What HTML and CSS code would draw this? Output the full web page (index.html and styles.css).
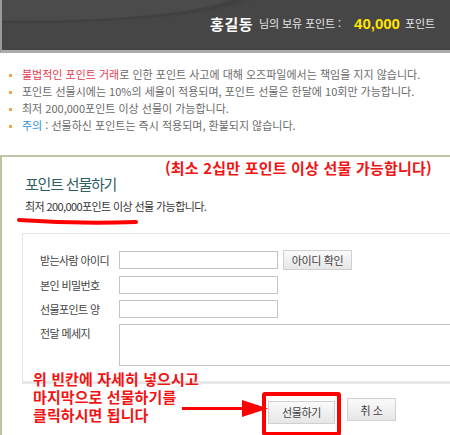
FILE: index.html
```html
<!DOCTYPE html>
<html lang="ko">
<head>
    <meta charset="UTF-8">
    <title>포인트 선물하기</title>
    <link rel="stylesheet" href="styles.css">
</head>
<body>
    <!-- 보유 포인트 -->
    <div class="top-bar">
        <strong class="user">홍길동</strong>
        <span class="small">님의 보유 포인트 :</span>
        <strong class="points">40,000</strong>
        <span class="small">포인트</span>
    </div>

    <ul class="notice">
        <li><em class="warn">불법적인 포인트 거래</em>로 인한 포인트 사고에 대해 오즈파일에서는 책임을 지지 않습니다.</li>
        <li>포인트 선물시에는 10%의 세율이 적용되며, 포인트 선물은 한달에 10회만 가능합니다.</li>
        <li>최저 200,000포인트 이상 선물이 가능합니다.</li>
        <li><em class="info">주의</em> : 선물하신 포인트는 즉시 적용되며, 환불되지 않습니다.</li>
    </ul>

    <section class="gift">
        <p class="gift-note">(최소 2십만 포인트 이상 선물 가능합니다)</p>
        <h2>포인트 선물하기</h2>
        <p class="gift-min">최저 200,000포인트 이상 선물 가능합니다.</p>
        <svg class="mark-line" width="124" height="10" viewBox="0 0 124 10">
            <path d="M3 4 Q 60 8 120 6" stroke="#f00" stroke-width="4" fill="none" stroke-linecap="round"/>
        </svg>

        <div class="form-box">
            <div class="row">
                <label>받는사람 아이디</label>
                <input type="text">
                <button class="btn btn-check">아이디 확인</button>
            </div>
            <div class="row">
                <label>본인 비밀번호</label>
                <input type="password">
            </div>
            <div class="row">
                <label>선물포인트 양</label>
                <input type="text">
            </div>
            <div class="row">
                <label>전달 메세지</label>
                <textarea></textarea>
            </div>
        </div>

        <div class="actions">
            <div class="hint">
                <p>위 빈칸에 자세히 넣으시고</p>
                <p>마지막으로 선물하기를</p>
                <p>클릭하시면 됩니다</p>
            </div>
            <svg class="arrow" width="86" height="17" viewBox="0 0 86 17">
                <rect x="0" y="7" width="64" height="3" fill="#f00"/>
                <polygon points="60,0 86,8.5 60,17" fill="#f00"/>
            </svg>
            <div class="send-wrap">
                <button class="btn btn-send">선물하기</button>
            </div>
            <button class="btn btn-cancel">취 소</button>
        </div>
    </section>
</body>
</html>
```

FILE: styles.css
```css
* {
    margin: 0;
    padding: 0;
    box-sizing: border-box;
}

body {
    font-family: 'Noto Sans CJK KR', 'Noto Sans', sans-serif;
    background-color: #fff;
    color: #444;
    overflow: hidden;
}

/* Top bar */
.top-bar {
    height: 53px;
    padding: 0 15px 4px 0;
    display: flex;
    justify-content: flex-end;
    align-items: center;
    gap: 5px;
    background-color: #464646;
    background-image: radial-gradient(ellipse 300px 40px at 20px -8px, #4b4b4b 70%, #3f3f3f 74%, transparent 80%);
    border-left: 2px solid #9a9a9a;
    border-bottom: 3px solid #ababab;
    color: #e6e6e6;
}

.top-bar .user {
    font-size: 15px;
    color: #fff;
    letter-spacing: 0.5px;
    margin-right: 1px;
}

.top-bar .small {
    font-size: 11px;
    letter-spacing: -0.1px;
}

.top-bar .points {
    font-family: 'Liberation Sans', sans-serif;
    font-size: 15px;
    color: #ffe400;
    margin-left: 8px;
}

/* Notice */
.notice {
    list-style: none;
    padding: 13px 0 0 22px;
    font-size: 11px;
    line-height: 17px;
    color: #6a6a6a;
}

.notice li {
    position: relative;
}

.notice li::before {
    content: '';
    position: absolute;
    left: -13px;
    top: 8px;
    width: 3px;
    height: 3px;
    background: #f5a04a;
}

.notice em {
    font-style: normal;
}

.notice .warn {
    color: #e5394f;
}

.notice .info {
    color: #2f8fd8;
}

/* Gift panel */
.gift {
    position: relative;
    margin-top: 21px;
    padding: 17px 0 20px 20px;
    border-top: 2px solid #c2c2a4;
    border-left: 2px solid #c2c2a0;
    overflow: hidden;
}

.gift-note {
    position: absolute;
    left: 163px;
    top: 0;
    font-size: 15px;
    font-weight: bold;
    color: #f01414;
    letter-spacing: 0.2px;
}

.gift h2 {
    margin-left: 3px;
    font-size: 15px;
    line-height: 20px;
    font-weight: normal;
    color: #2e5d63;
    letter-spacing: -1.2px;
}

.gift-min {
    margin: 3px 0 0 3px;
    font-size: 11px;
    line-height: 18px;
    color: #333;
    letter-spacing: -0.6px;
}

.mark-line {
    position: absolute;
    left: 14px;
    top: 59px;
}

/* Form */
.form-box {
    width: 520px;
    margin-top: 18px;
    padding: 17px 0 15px 17px;
    border: 1px solid #e4e4e4;
    border-bottom: 3px solid #e8e8e8;
    display: flex;
    flex-direction: column;
    gap: 6px;
}

.row {
    display: flex;
    align-items: flex-start;
}

.row label {
    width: 79px;
    font-size: 11px;
    line-height: 18px;
    color: #444;
    letter-spacing: -0.6px;
}

.row input,
.row textarea {
    width: 159px;
    height: 18px;
    border: 1px solid #c4c4c4;
    background: #fff;
}

.row textarea {
    width: 360px;
    height: 42px;
    resize: none;
}

.btn {
    font-family: inherit;
    font-size: 11px;
    color: #444;
    letter-spacing: -0.4px;
    border: 1px solid #d0d0d0;
    background: linear-gradient(#fafafa, #e6e6e6);
    cursor: pointer;
}

.btn-check {
    width: 69px;
    height: 20px;
    margin: -1px 0 0 5px;
}

/* Actions */
.actions {
    position: relative;
    margin-top: 14px;
    padding-left: 246px;
    display: flex;
    gap: 12px;
}

.hint {
    position: absolute;
    left: 11px;
    top: -28px;
    font-size: 15px;
    line-height: 18px;
    font-weight: bold;
    color: #f01414;
    letter-spacing: 0.1px;
}

.arrow {
    position: absolute;
    left: 160px;
    top: 2px;
}

.send-wrap {
    position: relative;
}

.send-wrap::after {
    content: '';
    position: absolute;
    left: -6px;
    top: -6px;
    right: -6px;
    bottom: -12px;
    border: 4px solid #f00;
    border-radius: 3px;
}

.btn-send {
    width: 67px;
    height: 23px;
}

.btn-cancel {
    width: 49px;
    height: 23px;
}
```
